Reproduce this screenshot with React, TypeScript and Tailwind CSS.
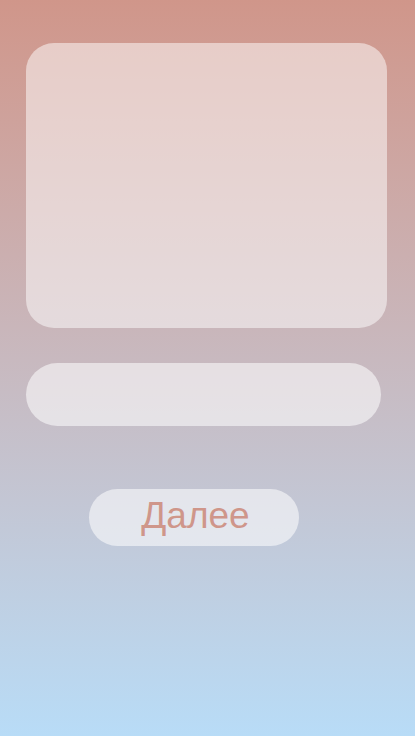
import React from 'react';

const App: React.FC = () => {
  return (
    <div className="min-h-[736px] w-full bg-linear-to-b from-[#d0968a] to-[#b8dcf7] pt-[43px] pl-[26px] flex flex-col" style={{ fontFamily: '"Liberation Sans", Arial, sans-serif' }}>
      <div className="w-[361px] h-[285px] rounded-[28px] bg-white/50" />
      <div className="mt-[35px] w-[355px] h-[63px] rounded-full bg-white/55" />
      <div className="mt-[63px] ml-[63px] w-[210px] h-[57px] rounded-full bg-white/55 flex items-center justify-center">
        <span className="text-[37px] leading-none text-[#cf968a] pl-[3px] -mt-[4px]">Далее</span>
      </div>
    </div>
  );
};

export default App;
